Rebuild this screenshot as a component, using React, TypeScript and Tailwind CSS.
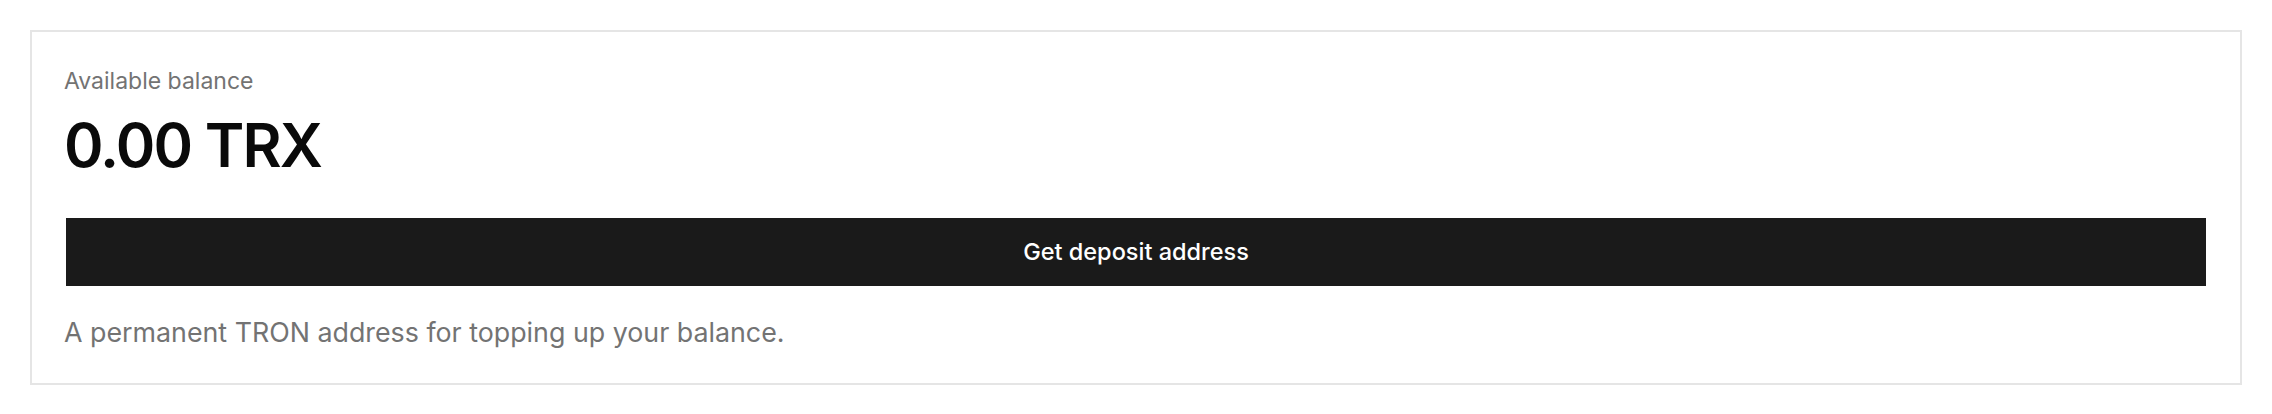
export default function App() {
  return (
    <div className="min-h-screen bg-white px-[30px] pt-[30px] font-['Inter',sans-serif]">
      <div className="flex flex-col border-2 border-[#e5e5e5] bg-white px-[32px] pt-[32px] pb-[31px]">
        <p className="text-[23px] leading-[34px] text-[#737373]">Available balance</p>
        <h2 className="mt-[17px] text-[60px] leading-[60px] font-semibold tracking-[-0.03em] text-[#0a0a0a]">
          0.00 TRX
        </h2>
        <button className="mx-[2px] mt-[43px] h-[68px] bg-[#1a1a1a] text-[23.5px] font-medium text-white">
          Get deposit address
        </button>
        <p className="mt-[27px] text-[26.8px] leading-[39px] text-[#737373]">
          A permanent TRON address for topping up your balance.
        </p>
      </div>
    </div>
  )
}
